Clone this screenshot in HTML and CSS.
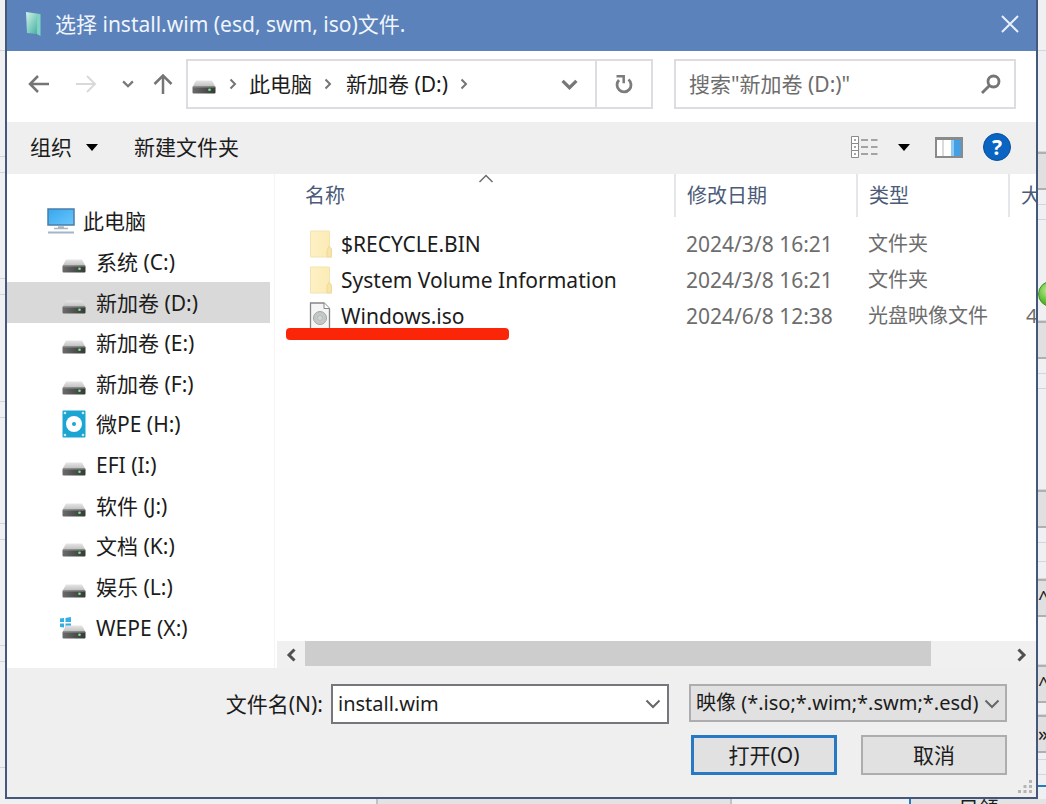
FILE: index.html
```
<!DOCTYPE html>
<html lang="zh-CN">
<head>
<meta charset="utf-8">
<title>选择 install.wim (esd, swm, iso)文件.</title>
<link rel="stylesheet" href="styles.css">
</head>
<body>
<svg class="symbols" aria-hidden="true">
  <defs>
    <linearGradient id="lid" x1="0" y1="0" x2="0" y2="1"><stop offset="0" stop-color="#e6e6e6"/><stop offset="1" stop-color="#bdbdbd"/></linearGradient>
    <linearGradient id="front" x1="0" y1="0" x2="1" y2="0"><stop offset="0" stop-color="#6b6b6b"/><stop offset="1" stop-color="#343a36"/></linearGradient>
    <linearGradient id="screen" x1="0" y1="0" x2="1" y2="1"><stop offset="0" stop-color="#36a7ee"/><stop offset="1" stop-color="#6cc6fb"/></linearGradient>
    <linearGradient id="glass" x1="0" y1="0" x2="1" y2="1"><stop offset="0" stop-color="#d3f3ea"/><stop offset="1" stop-color="#2fa595"/></linearGradient>
    <linearGradient id="paper" x1="0" y1="0" x2="1" y2="0"><stop offset="0" stop-color="#fdf0c4"/><stop offset="1" stop-color="#fcebb4"/></linearGradient>
  </defs>
  <symbol id="drive" viewBox="0 0 24 14">
    <path d="M4 0.500h16l3.500 6.500h-23z" fill="url(#lid)"/>
    <rect x="0.500" y="6.500" width="23" height="7" rx="1" fill="url(#front)"/>
    <path d="M1 7h22" stroke="#8d8d8d"/>
    <circle cx="17.500" cy="9.800" r="1.300" fill="#7ee58f"/>
  </symbol>
  <symbol id="folder" viewBox="0 0 24 28">
    <path d="M1.500 1h19v17l2 2v7h-21z" fill="url(#paper)" stroke="#f3e3b0"/>
    <path d="M18 27v-7l2-4 2.500 3v8z" fill="#f8e4a6" stroke="#eedb9c"/>
  </symbol>
  <symbol id="chev" viewBox="0 0 16 10"><path d="M1.500 1.500 8 8l6.500-6.500" fill="none" stroke="currentColor" stroke-width="var(--w,2)"/></symbol>
</svg>
<div class="desktop">
  <div class="behind-left"><i></i><i></i><i></i><i></i><i></i><i></i></div>

  <main class="dialog">
    <header class="titlebar">
      <svg class="app-icon" viewBox="0 0 18 26"><path d="M1 1 15 3v22L12 23 2 22z" fill="url(#glass)"/><path d="M12 4.500 15.500 3v22L12 23z" fill="#7fd3c5"/></svg>
      <h1>选择 install.wim (esd, swm, iso)文件.</h1>
      <button class="plain close" aria-label="关闭"><svg viewBox="0 0 20 20"><path d="M2 2l16 16M18 2 2 18" stroke="#e8f0fc" stroke-width="2"/></svg></button>
    </header>

    <nav class="navbar">
      <div class="history">
        <button class="plain" aria-label="后退"><svg width="22" height="20" viewBox="0 0 22 20"><path d="M21 10H2M10 2 2 10l8 8" fill="none" stroke="#757575" stroke-width="2.500"/></svg></button>
        <button class="plain" aria-label="前进"><svg width="22" height="20" viewBox="0 0 22 20"><path d="M1 10h19M12 2l8 8-8 8" fill="none" stroke="#d9d9d9" stroke-width="2"/></svg></button>
        <button class="plain recent" aria-label="最近位置"><svg width="12" height="8"><use href="#chev"/></svg></button>
        <button class="plain" aria-label="向上"><svg width="20" height="22" viewBox="0 0 20 22"><path d="M10 21V3M1.500 11 10 2.500l8.500 8.500" fill="none" stroke="#757575" stroke-width="2.500"/></svg></button>
      </div>
      <div class="address">
        <svg class="drive" width="24" height="14"><use href="#drive"/></svg>
        <svg class="sep" viewBox="0 0 8 12"><path d="M1.500 1.500 6 6l-4.500 4.500"/></svg>
        <button class="plain">此电脑</button>
        <svg class="sep" viewBox="0 0 8 12"><path d="M1.500 1.500 6 6l-4.500 4.500"/></svg>
        <button class="plain">新加卷 (D:)</button>
        <svg class="sep" viewBox="0 0 8 12"><path d="M1.500 1.500 6 6l-4.500 4.500"/></svg>
        <button class="plain open-history" aria-label="以前的位置"><svg width="17" height="11"><use href="#chev"/></svg></button>
        <button class="plain refresh" aria-label="刷新"><svg width="18" height="20" viewBox="0 0 18 20"><path d="M13.500 5.500A7 7 0 1 1 4 6" fill="none" stroke="#7c7c7c" stroke-width="2.800"/><path d="M1.500 2.300h7.200v7" fill="none" stroke="#7c7c7c" stroke-width="2.500"/></svg></button>
      </div>
      <div class="search">
        <input type="text" aria-label="搜索" placeholder='搜索"新加卷 (D:)"'>
        <svg width="20" height="20" viewBox="0 0 20 20"><circle cx="12.500" cy="7.500" r="5.500" fill="none" stroke="#757575" stroke-width="2.800"/><path d="M8.500 11.500 1 19" stroke="#757575" stroke-width="2.800"/></svg>
      </div>
    </nav>

    <div class="toolbar">
      <button class="plain">组织 <svg width="12" height="7" viewBox="0 0 12 7"><path d="M0 0h12L6 7z"/></svg></button>
      <button class="plain">新建文件夹</button>
      <div class="view-tools">
        <button class="plain" aria-label="更改视图"><svg width="28" height="22" viewBox="0 0 28 22"><g fill="#fff" stroke="#8a8a8a"><path d="M1.500.500h7v7h-7zM1.500 7.500h7v7h-7zM1.500 14.500h7v7h-7z"/></g><path d="M11 4h7m3 0h6.500M11 11h7m3 0h6.500M11 18h7m3 0h6.500M4 4h2M4 11h2M4 18h2" stroke="#8a8a8a" stroke-width="1.500"/></svg></button>
        <button class="plain view-menu" aria-label="更多选项"><svg width="12" height="7" viewBox="0 0 12 7"><path d="M0 0h12L6 7z"/></svg></button>
        <button class="plain" aria-label="预览窗格"><svg width="28" height="21" viewBox="0 0 28 21"><path d="M1 1h26v19H1z" fill="#fff" stroke="#8a8a8a" stroke-width="2"/><path d="M0 0h28v3H0z" fill="#8a8a8a"/><path d="M8 3v16" stroke="#b5b5b5"/><path d="M16 3h10v16H16z" fill="#44a0e2"/><path d="M16 3h3v16h-3z" fill="#8ccaf2"/></svg></button>
        <button class="plain help" aria-label="帮助">?</button>
      </div>
    </div>

    <div class="panes">
      <ul class="tree">
        <li class="root"><svg width="28" height="26" viewBox="0 0 28 26"><path d="M1 1h26v16H1z" fill="url(#screen)" stroke="#4a7ea8" stroke-width="1.500"/><path d="M7 20.500h14M11 19h6" stroke="#a9b7c4" stroke-width="1.500"/><path d="M1 24.500h26" stroke="#a3b5c8" stroke-width="2"/></svg><button class="plain">此电脑</button></li>
        <li><svg class="drive" width="24" height="14"><use href="#drive"/></svg><button class="plain">系统 (C:)</button></li>
        <li class="selected"><svg class="drive" width="24" height="14"><use href="#drive"/></svg><button class="plain">新加卷 (D:)</button></li>
        <li><svg class="drive" width="24" height="14"><use href="#drive"/></svg><button class="plain">新加卷 (E:)</button></li>
        <li><svg class="drive" width="24" height="14"><use href="#drive"/></svg><button class="plain">新加卷 (F:)</button></li>
        <li><svg width="24" height="28" viewBox="0 0 24 28"><rect x=".5" y=".5" width="23" height="27" rx="1" fill="#1aa5d3"/><circle cx="12" cy="14" r="8" fill="#fff"/><circle cx="12" cy="14" r="2" fill="#1aa5d3"/><g fill="#c9edf8"><circle cx="3" cy="3" r="1.300"/><circle cx="21" cy="3" r="1.300"/><circle cx="3" cy="25" r="1.300"/><circle cx="21" cy="25" r="1.300"/></g></svg><button class="plain">微PE (H:)</button></li>
        <li><svg class="drive" width="24" height="14"><use href="#drive"/></svg><button class="plain">EFI (I:)</button></li>
        <li><svg class="drive" width="24" height="14"><use href="#drive"/></svg><button class="plain">软件 (J:)</button></li>
        <li><svg class="drive" width="24" height="14"><use href="#drive"/></svg><button class="plain">文档 (K:)</button></li>
        <li><svg class="drive" width="24" height="14"><use href="#drive"/></svg><button class="plain">娱乐 (L:)</button></li>
        <li><svg class="system-drive" width="26" height="22" viewBox="0 0 26 22"><path d="M0 1.500 4 1v4H0zM5.500 1 11 0v5H5.500zM0 6.500h4v4L0 10zM5.500 6.500H11v5l-5.500-.700z" fill="#35aee4"/><svg x="2" y="8" width="24" height="14"><use href="#drive"/></svg></svg><button class="plain">WEPE (X:)</button></li>
      </ul>

      <section class="files">
        <div class="list">
          <table>
            <colgroup><col class="c-name"><col class="c-date"><col class="c-type"><col class="c-size"></colgroup>
            <thead>
              <tr><th class="sorted">名称<svg width="16" height="9" viewBox="0 0 16 9"><path d="M1.500 8 8 1.500 14.500 8" fill="none" stroke="#6d6d6d" stroke-width="1.500"/></svg></th><th>修改日期</th><th>类型</th><th>大小</th></tr>
            </thead>
            <tbody>
              <tr><td><div class="file"><svg width="24" height="28"><use href="#folder"/></svg>$RECYCLE.BIN</div></td><td class="date">2024/3/8 16:21</td><td>文件夹</td><td></td></tr>
              <tr><td><div class="file"><svg width="24" height="28"><use href="#folder"/></svg>System Volume Information</div></td><td class="date">2024/3/8 16:21</td><td>文件夹</td><td></td></tr>
              <tr><td><div class="file marked"><svg width="24" height="28" viewBox="0 0 24 28"><path d="M1.500 1H15l5.500 5.500V27h-19z" fill="#f5f5f5" stroke="#868686" stroke-width="1.300"/><path d="M15 1v5.500h5.500" fill="#fff" stroke="#868686"/><circle cx="11" cy="16" r="6.500" fill="#c4c8c9" stroke="#a2a6a7"/><circle cx="11" cy="16" r="2.500" fill="#d3d6d6" stroke="#b9bdbe"/></svg>Windows.iso</div></td><td class="date">2024/6/8 12:38</td><td>光盘映像文件</td><td class="size">4</td></tr>
            </tbody>
          </table>
        </div>
        <div class="scrollbar">
          <button class="plain" aria-label="向左滚动"><svg width="10" height="14" viewBox="0 0 10 14"><path d="M8.500 1.500 3 7l5.500 5.500" fill="none" stroke="#505050" stroke-width="3"/></svg></button>
          <div class="track"><div class="thumb"></div></div>
          <button class="plain" aria-label="向右滚动"><svg width="10" height="14" viewBox="0 0 10 14"><path d="M1.500 1.500 7 7l-5.500 5.500" fill="none" stroke="#505050" stroke-width="3"/></svg></button>
        </div>
      </section>
    </div>

    <footer class="actions">
      <div class="row">
        <label for="filename">文件名(N):</label>
        <div class="combo"><input id="filename" type="text" value="install.wim"><button class="plain" aria-label="展开"><svg width="16" height="10"><use href="#chev"/></svg></button></div>
        <div class="filter"><select aria-label="文件类型"><option>映像 (*.iso;*.wim;*.swm;*.esd)</option></select><svg width="16" height="10"><use href="#chev"/></svg></div>
      </div>
      <div class="row buttons">
        <button class="push default">打开(O)</button>
        <button class="push">取消</button>
      </div>
      <svg class="grip" width="14" height="14" viewBox="0 0 14 14" fill="#b5b5b5"><path d="M11 0h3v3h-3zM11 5h3v3h-3zM11 10h3v3h-3zM5.500 5h3v3h-3zM5.500 10h3v3h-3zM0 10h3v3H0z"/></svg>
    </footer>
  </main>

  <div class="behind-right">
    <i class="h51"></i><i class="h101"></i><b></b><i class="h15"></i><i class="h15"></i><i class="h101 ball"></i><b></b><i class="h15"></i><i class="h15"></i><i class="h101"></i><b></b><i class="h15"></i><i class="h19"></i><i class="h17"></i><b>^</b><i class="h48"></i><b>^</b><i class="h12"></i><b>»</b><i class="h7"></i><i class="h15"></i><i class="h12 blue"></i>
  </div>
  <div class="behind-bottom"><span class="b1"></span><span class="b2"></span><span class="b3"></span><span class="b4">只领</span></div>
</div>
</body>
</html>
```
FILE: styles.css
```
* { box-sizing: border-box; }

body {
  margin: 0;
  background: #eff0f1;
  color: #1c1c1c;
  font: 20px/26px "Noto Sans", "Noto Sans CJK SC", sans-serif;
}

button, input, select { font: inherit; color: inherit; }
svg { display: block; flex: none; }
.symbols { position: absolute; width: 0; height: 0; }

.plain {
  display: flex;
  align-items: center;
  justify-content: center;
  border: 0;
  padding: 0;
  background: none;
  white-space: nowrap;
}

.desktop {
  display: grid;
  grid-template: minmax(0, 1fr) 5px / 5px minmax(0, 1fr) 8px;
  height: 100vh;
  min-height: 640px;
  overflow: hidden;
}

.dialog {
  display: flex;
  flex-direction: column;
  border: 2px solid #45587c;
  border-top: 0;
  background: #fff;
}

/* Title bar */
.titlebar {
  display: flex;
  align-items: center;
  gap: 12px;
  height: 51px;
  padding: 0 16px 3px 18px;
  background: #5b82ba;
  color: #f0f5fc;
}
.titlebar h1 { flex: 1; margin: 0; font-size: 21px; font-weight: 400; white-space: nowrap; }
.app-icon { width: 18px; height: 26px; }
.close svg { width: 20px; height: 20px; }

/* Navigation */
.navbar {
  display: flex;
  align-items: center;
  height: 71px;
  padding: 0 20px 5px 21px;
}
.history { display: flex; align-items: center; gap: 25px; width: 158px; flex: none; }
.recent { color: #777; margin: 0 -6px 0 0; --w: 3; }
.address, .search { display: flex; align-items: center; min-width: 0; height: 50px; border: 2px solid #dcdde1; font-size: 21px; }
.address { flex: 1 1 467px; margin-right: 21px; padding-left: 4px; }
.search { flex: 1 1 342px; padding: 0 13px; }
.address .drive { margin-top: 6px; }
.sep { width: 8px; height: 12px; margin: 0 12px 0 13px; fill: none; stroke: #757575; stroke-width: 2; }
.plain + .sep { margin: 0 14px 0 12px; }
.open-history { margin-left: auto; margin-right: 17px; color: #777; --w: 3; }
.refresh { align-self: stretch; width: 56px; border-left: 2px solid #dcdde1; }
.search input { flex: 1; min-width: 0; border: 0; padding: 0; background: none; outline: 0; }
.search input::placeholder { color: #6d6d6d; opacity: 1; }

/* Toolbar */
.toolbar {
  display: flex;
  align-items: center;
  gap: 36px;
  height: 52px;
  padding: 0 25px 2px 23px;
  background: #efefef;
  font-size: 21px;
}
.toolbar .plain { gap: 14px; }
.view-tools { display: flex; align-items: center; gap: 20px; margin-left: auto; }
.view-menu { margin-right: 5px; }
.toolbar .help {
  width: 28px;
  height: 28px;
  border: 1px solid #0b4f9e;
  border-radius: 50%;
  background: #0a64c2;
  color: #fff;
  font-weight: 700;
}

/* Panes */
.panes { flex: 1; display: flex; min-height: 0; }
.tree {
  display: grid;
  grid-auto-rows: 1fr;
  flex: none;
  width: 268px;
  margin: 0;
  padding: 27px 4px 20px 0;
  border-right: 1px solid #f4f4f4;
  list-style: none;
  font-size: 21px;
}
.tree li { display: flex; align-items: center; gap: 10px; padding: 0 0 0 55px; }
.tree .root { gap: 8px; padding-left: 40px; }
.tree .drive { margin-top: 8px; }
.tree .system-drive { margin-left: -2px; }
.tree .selected { background: #d9d9d9; }

.files { flex: 1; display: flex; flex-direction: column; min-width: 0; }
.list { flex: 1; overflow: hidden; }
table { width: 854px; table-layout: fixed; border-collapse: collapse; }
.c-name { width: 400px; }
.c-date { width: 182px; }
.c-type { width: 152px; }
th, td { padding: 0 0 0 11px; text-align: left; font-weight: 400; white-space: nowrap; }
th { position: relative; height: 43px; border-right: 2px solid #e6e6ea; color: #4b5b78; }
th:first-child { padding-left: 30px; }
.sorted svg { position: absolute; top: 0; left: 203px; }
tbody::before { content: ""; display: block; height: 9px; }
td { height: 36px; color: #6d6d6d; }
td:first-child { padding-left: 34px; color: #1c1c1c; }
td.size { padding-left: 17px; }
.file, .date { font-size: 21px; }
.file { display: flex; align-items: center; gap: 8px; position: relative; }
.marked::after {
  content: "";
  position: absolute;
  left: -23px;
  top: 26px;
  width: 223px;
  height: 12px;
  border-radius: 4px;
  background: #fb2607;
}

.scrollbar { display: flex; height: 27px; margin-left: 2px; background: #f0f0f0; }
.scrollbar .plain { width: 28px; }
.track { flex: 1; padding-bottom: 2px; }
.thumb { width: 89%; height: 100%; background: #cdcdcd; }

/* Footer */
.actions { position: relative; height: 129px; padding: 16px 29px 0 0; background: #efefef; }
.row { display: flex; justify-content: flex-end; align-items: flex-start; }
.row label { padding: 7px 8px 0 0; font-size: 21px; }
.combo { display: flex; width: 338px; height: 40px; margin-right: 20px; border: 2px solid #77777b; background: #fff; }
.combo input { flex: 1; min-width: 0; border: 0; padding: 0 5px; background: none; outline: 0; }
.combo .plain { width: 28px; color: #666; }
.filter { position: relative; width: 318px; height: 38px; color: #666; }
.filter select {
  appearance: none;
  width: 100%;
  height: 100%;
  border: 2px solid #adadb0;
  border-radius: 0;
  padding: 0 0 0 5px;
  background: #e1e1e1;
  color: #1c1c1c;
}
.filter svg { position: absolute; right: 7px; top: 15px; pointer-events: none; }
.buttons { gap: 24px; margin-top: 11px; }
.push { width: 146px; height: 40px; border: 2px solid #adadb0; padding: 0; background: #e1e1e1; font-size: 21px; }
.push.default { border: 3px solid #2779c4; }
.grip { position: absolute; right: 4px; bottom: 3px; }

/* Windows behind the dialog */
.behind-left { display: flex; flex-direction: column; justify-content: space-between; padding: 50px 0 16px; }
.behind-left i { flex: 1; margin-bottom: 15px; border: 1px solid #d3d3d9; border-left: 0; border-right: 0; }
.behind-right { overflow: hidden; font-size: 20px; line-height: 34px; }
.behind-right i, .behind-right b { display: block; font-weight: 400; }
.behind-right i { border-bottom: 1px solid #d6d6da; }
.behind-right b { height: 38px; border: 2px solid #b0b0b3; border-width: 2px 0; background: #e0e0e0; }
.h7 { height: 7px; }
.h12 { height: 12px; }
.h15 { height: 15px; }
.h17 { height: 17px; }
.h19 { height: 19px; }
.h48 { height: 48px; }
.h51 { height: 51px; }
.h101 { height: 101px; }
.behind-right .blue { border-bottom: 2px solid #2779c4; }
.behind-right .ball { display: flex; align-items: flex-end; padding-bottom: 13px; }
.ball::after {
  content: "";
  flex: none;
  width: 24px;
  height: 24px;
  border: 1px solid #3d8f1c;
  border-radius: 50%;
  background: radial-gradient(circle at 40% 35%, #c6f29a, #53b52a 60%);
}
.behind-bottom { grid-column: 1 / -1; display: flex; overflow: hidden; line-height: 20px; }
.behind-bottom > span { border-right: 2px solid #c2c2c6; }
.b1 { flex: 378; }
.b2 { flex: 354; background: #e3e3e3; }
.b3 { flex: 178; }
.behind-bottom .b3 { border-color: #2779c4; }
.b4 { flex: 136; min-width: 0; text-align: center; background: #e3e3e3; }
.behind-bottom .b4 { border: 0; }
```
